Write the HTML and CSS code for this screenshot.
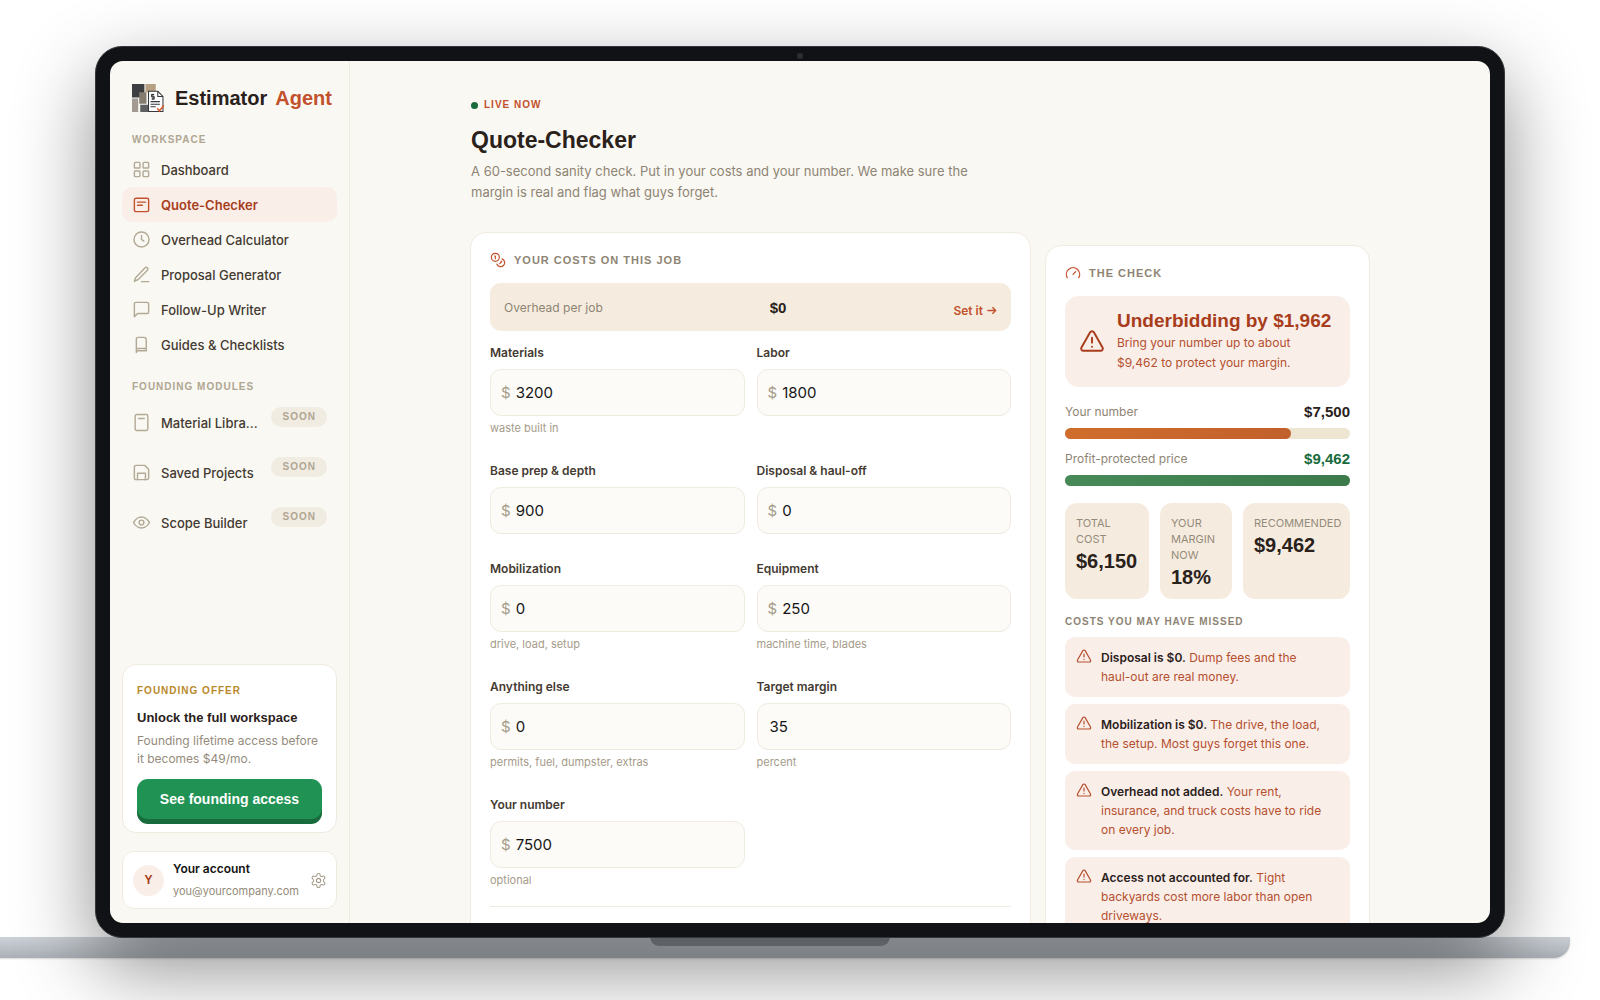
FILE: index.html
```
<!DOCTYPE html>
<html lang="en">

<head>
  <meta charset="UTF-8" />
  <meta name="viewport" content="width=device-width, initial-scale=1.0" />
  <title>Estimator Agent - Quote-Checker</title>
  <link rel="stylesheet" href="styles.css">
</head>

<body>
  <!-- Shared icons -->
  <svg class="sprite" aria-hidden="true">
    <symbol id="alert" viewBox="0 0 24 24">
      <path d="M21.73 18l-8-14a2 2 0 0 0-3.46 0l-8 14A2 2 0 0 0 4 21h16a2 2 0 0 0 1.73-3z" />
      <path d="M12 9v4.500M12 17.200v.1" />
    </symbol>
  </svg>

  <div class="laptop">
    <div class="lid">
      <span class="camera"></span>
      <div class="screen">
        <aside class="sidebar">
          <div class="brand">
            <svg class="logo" viewBox="0 0 31 27">
              <path fill="#3d3f41" d="M0 0h12v13H0z" />
              <path fill="#b8a083" d="M13 0h10v8H13z" />
              <path fill="#a39b93" d="M0 14h6v13H0z" />
              <path fill="#857c70" d="M7 8h7v11H7z" />
              <path fill="#5f6060" d="M8 20h8v7H8z" />
              <path fill="#fff" stroke="#34383c" d="M16 7h9l5 5v14.500H16z" />
              <path fill="none" stroke="#34383c" d="M25 7v5h5M18 17h9M18 19.500h9M18 22h5" />
              <path fill="none" stroke="#34383c" d="M21.500 10.200h-2.500v2h2.500v2.300H19M20.300 9.500v6" />
              <path fill="none" stroke="#d9582c" stroke-width="1.500" d="M24.500 23.500l2 2.500 4.500-5.500" />
            </svg>
            <span>Estimator</span>
            <span class="accent">Agent</span>
          </div>

          <h2 class="side-label">Workspace</h2>
          <nav class="nav">
            <a href="#" class="nav-item">
              <svg class="icon" viewBox="0 0 24 24"><rect x="3" y="3" width="7" height="7" rx="1" /><rect x="14" y="3" width="7" height="7" rx="1" /><rect x="3" y="14" width="7" height="7" rx="1" /><rect x="14" y="14" width="7" height="7" rx="1" /></svg>
              <span>Dashboard</span>
            </a>
            <a href="#" class="nav-item active">
              <svg class="icon" viewBox="0 0 24 24"><rect x="3" y="4" width="18" height="17" rx="2" /><path d="M7 9h10M7 13h6" /></svg>
              <span>Quote-Checker</span>
            </a>
            <a href="#" class="nav-item">
              <svg class="icon" viewBox="0 0 24 24"><circle cx="12" cy="12" r="9.500" /><path d="M12 7v5l3 2" /></svg>
              <span>Overhead Calculator</span>
            </a>
            <a href="#" class="nav-item">
              <svg class="icon" viewBox="0 0 24 24"><path d="M12 21h9M16.500 3.500a2.120 2.120 0 0 1 3 3L7.500 18.500 3 20.500l1.500-4.500z" /></svg>
              <span>Proposal Generator</span>
            </a>
            <a href="#" class="nav-item">
              <svg class="icon" viewBox="0 0 24 24"><path d="M21 15a2 2 0 0 1-2 2H7l-4 4V5a2 2 0 0 1 2-2h14a2 2 0 0 1 2 2z" /></svg>
              <span>Follow-Up Writer</span>
            </a>
            <a href="#" class="nav-item">
              <svg class="icon" viewBox="0 0 24 24"><path d="M5.500 22V5a2 2 0 0 1 2-2H15a3 3 0 0 1 3 3v14H7.500a2 2 0 0 0-2 2M5.500 19a2 2 0 0 1 2-2H18" /></svg>
              <span>Guides &amp; Checklists</span>
            </a>
          </nav>

          <h2 class="side-label">Founding Modules</h2>
          <nav class="nav">
            <a href="#" class="nav-item soon">
              <svg class="icon" viewBox="0 0 24 24"><rect x="4" y="2" width="16" height="20" rx="2" /><path d="M8.500 7h7" /></svg>
              <span>Material Libra...</span>
              <em class="badge">SOON</em>
            </a>
            <a href="#" class="nav-item soon">
              <svg class="icon" viewBox="0 0 24 24"><path d="M19 21H5a2 2 0 0 1-2-2V5a2 2 0 0 1 2-2h11l5 5v11a2 2 0 0 1-2 2z" /><path d="M7 21v-8h10v8" /></svg>
              <span>Saved Projects</span>
              <em class="badge">SOON</em>
            </a>
            <a href="#" class="nav-item soon">
              <svg class="icon" viewBox="0 0 24 24"><path d="M2 12s3.500-7 10-7 10 7 10 7-3.500 7-10 7-10-7-10-7z" /><circle cx="12" cy="12" r="3" /></svg>
              <span>Scope Builder</span>
              <em class="badge">SOON</em>
            </a>
          </nav>

          <div class="offer">
            <p class="offer-label">Founding Offer</p>
            <h3>Unlock the full workspace</h3>
            <p class="offer-text">Founding lifetime access before it becomes $49/mo.</p>
            <button type="button" class="offer-btn">See founding access</button>
          </div>

          <div class="account">
            <span class="avatar">Y</span>
            <div class="account-info">
              <strong>Your account</strong>
              <span>you@yourcompany.com</span>
            </div>
            <svg class="icon gear" viewBox="0 0 24 24"><path d="M12.220 2h-.44a2 2 0 0 0-2 2v.18a2 2 0 0 1-1 1.730l-.43.25a2 2 0 0 1-2 0l-.15-.08a2 2 0 0 0-2.730.73l-.22.38a2 2 0 0 0 .73 2.730l.15.1a2 2 0 0 1 1 1.720v.51a2 2 0 0 1-1 1.740l-.15.09a2 2 0 0 0-.73 2.730l.22.38a2 2 0 0 0 2.730.73l.15-.08a2 2 0 0 1 2 0l.43.25a2 2 0 0 1 1 1.730V20a2 2 0 0 0 2 2h.44a2 2 0 0 0 2-2v-.18a2 2 0 0 1 1-1.730l.43-.25a2 2 0 0 1 2 0l.15.08a2 2 0 0 0 2.730-.73l.22-.39a2 2 0 0 0-.73-2.730l-.15-.08a2 2 0 0 1-1-1.740v-.5a2 2 0 0 1 1-1.740l.15-.09a2 2 0 0 0 .73-2.730l-.22-.38a2 2 0 0 0-2.730-.73l-.15.08a2 2 0 0 1-2 0l-.43-.25a2 2 0 0 1-1-1.730V4a2 2 0 0 0-2-2z" /><circle cx="12" cy="12" r="3" /></svg>
          </div>
        </aside>

        <main class="main">
          <div class="content">
            <header class="page-head">
              <p class="live"><span class="dot"></span>Live Now</p>
              <h1>Quote-Checker</h1>
              <p class="intro">A 60-second sanity check. Put in your costs and your number. We make sure the margin is real and flag what guys forget.</p>
            </header>

            <div class="panels">
              <form class="card">
                <h2 class="card-title">
                  <svg class="icon" viewBox="0 0 24 24"><circle cx="8" cy="8" r="6" /><path d="M18.090 10.370A6 6 0 1 1 10.340 18M7 6h1v4M16.710 13.880l.7.71-2.820 2.820" /></svg>
                  Your costs on this job
                </h2>
                <div class="overhead">
                  <span>Overhead per job</span>
                  <strong>$0</strong>
                  <a href="#">Set it
                    <svg class="arrow" viewBox="0 0 24 24"><path d="M3 12h18M14 5l7 7-7 7" /></svg>
                  </a>
                </div>

                <div class="fields">
                  <div class="field">
                    <label for="materials">Materials</label>
                    <div class="box"><span>$</span><input type="text" id="materials" value="3200"></div>
                    <small>waste built in</small>
                  </div>
                  <div class="field">
                    <label for="labor">Labor</label>
                    <div class="box"><span>$</span><input type="text" id="labor" value="1800"></div>
                  </div>
                  <div class="field">
                    <label for="prep">Base prep &amp; depth</label>
                    <div class="box"><span>$</span><input type="text" id="prep" value="900"></div>
                  </div>
                  <div class="field">
                    <label for="disposal">Disposal &amp; haul-off</label>
                    <div class="box"><span>$</span><input type="text" id="disposal" value="0"></div>
                  </div>
                  <div class="field">
                    <label for="mobilization">Mobilization</label>
                    <div class="box"><span>$</span><input type="text" id="mobilization" value="0"></div>
                    <small>drive, load, setup</small>
                  </div>
                  <div class="field">
                    <label for="equipment">Equipment</label>
                    <div class="box"><span>$</span><input type="text" id="equipment" value="250"></div>
                    <small>machine time, blades</small>
                  </div>
                  <div class="field">
                    <label for="other">Anything else</label>
                    <div class="box"><span>$</span><input type="text" id="other" value="0"></div>
                    <small>permits, fuel, dumpster, extras</small>
                  </div>
                  <div class="field">
                    <label for="margin">Target margin</label>
                    <div class="box"><input type="text" id="margin" value="35"></div>
                    <small>percent</small>
                  </div>
                  <div class="field">
                    <label for="quote">Your number</label>
                    <div class="box"><span>$</span><input type="text" id="quote" value="7500"></div>
                    <small>optional</small>
                  </div>
                </div>
                <hr>
              </form>

              <section class="card check">
                <h2 class="card-title">
                  <svg class="icon" viewBox="0 0 24 24"><path d="M12 14l4-4M3.340 19a10 10 0 1 1 17.320 0" /></svg>
                  The check
                </h2>
                <div class="verdict">
                  <svg class="icon"><use href="#alert" /></svg>
                  <div>
                    <strong>Underbidding by $1,962</strong>
                    <p>Bring your number up to about $9,462 to protect your margin.</p>
                  </div>
                </div>

                <div class="bars">
                  <div class="bar-row"><span>Your number</span><strong>$7,500</strong></div>
                  <div class="track"><div class="fill" style="width: 79.3%"></div></div>
                  <div class="bar-row"><span>Profit-protected price</span><strong class="good">$9,462</strong></div>
                  <div class="track"><div class="fill good" style="width: 100%"></div></div>
                </div>

                <div class="stats">
                  <div class="stat"><span>Total cost</span><strong>$6,150</strong></div>
                  <div class="stat"><span>Your margin now</span><strong>18%</strong></div>
                  <div class="stat"><span>Recommended</span><strong>$9,462</strong></div>
                </div>

                <h3 class="missed-title">Costs you may have missed</h3>
                <ul class="missed">
                  <li><svg class="icon"><use href="#alert" /></svg><p><b>Disposal is $0.</b> Dump fees and the haul-out are real money.</p></li>
                  <li><svg class="icon"><use href="#alert" /></svg><p><b>Mobilization is $0.</b> The drive, the load, the setup. Most guys forget this one.</p></li>
                  <li><svg class="icon"><use href="#alert" /></svg><p><b>Overhead not added.</b> Your rent, insurance, and truck costs have to ride on every job.</p></li>
                  <li><svg class="icon"><use href="#alert" /></svg><p><b>Access not accounted for.</b> Tight backyards cost more labor than open driveways.</p></li>
                </ul>
              </section>
            </div>
          </div>
        </main>
      </div>
    </div>
    <div class="base"><div class="notch"></div></div>
  </div>
</body>

</html>
```
FILE: styles.css
```
/* General Styles */
* {
  box-sizing: border-box;
}

body {
  margin: 0;
  height: 100vh;
  overflow: hidden;
  background: #fff;
  color: #2a211b;
  font-family: Inter, "Liberation Sans", sans-serif;
}

h1, h2, h3, p, ul {
  margin: 0;
  padding: 0;
}

a {
  text-decoration: none;
}

.sprite {
  position: absolute;
  width: 0;
  height: 0;
}

.icon {
  width: 19px;
  height: 19px;
  flex: none;
  fill: none;
  stroke: currentColor;
  stroke-width: 1.8;
  stroke-linecap: round;
  stroke-linejoin: round;
}

/* Laptop */
.laptop {
  padding-top: 46px;
}

.lid {
  position: relative;
  z-index: 1;
  height: calc(100vh - 108px);
  margin: 0 95px;
  padding: 14px;
  background: #101216;
  border: 1px solid #34363b;
  border-radius: 27px;
  box-shadow: 0 30px 80px rgba(0, 0, 0, 0.45);
}

.camera {
  position: absolute;
  top: 6px;
  left: calc(50% - 3px);
  width: 6px;
  height: 6px;
  border-radius: 50%;
  background: #2b2e33;
}

.screen {
  display: flex;
  height: 100%;
  overflow: hidden;
  background: #f9f8f3;
  border-radius: 13px;
}

.base {
  height: 21px;
  margin: -1px 30px 0 -30px;
  background: linear-gradient(#cdd2d8, #abb0b6);
  border-radius: 0 0 16px 16px;
  box-shadow: 0 1px 2px rgba(0, 0, 0, 0.15);
}

.notch {
  width: 240px;
  height: 9px;
  margin: 0 auto;
  background: #8d9199;
  border-radius: 0 0 9px 9px;
}

/* Sidebar */
.sidebar {
  display: flex;
  flex-direction: column;
  flex: none;
  width: 240px;
  padding: 23px 12px 14px;
  border-right: 1px solid #f0ebdf;
}

.brand {
  display: flex;
  align-items: center;
  gap: 8px;
  height: 28px;
  padding-left: 10px;
  margin-bottom: 20px;
  font: bold 20px "Liberation Sans", Arial, sans-serif;
}

.logo {
  width: 32px;
  height: 28px;
  margin-right: 3px;
}

.accent {
  color: #c2512c;
}

.side-label {
  padding-left: 10px;
  margin-bottom: 4px;
  color: #b0a692;
  font: bold 10px/16px "Liberation Sans", Arial, sans-serif;
  letter-spacing: 1px;
  text-transform: uppercase;
}

.nav + .side-label {
  margin-top: 17px;
}

.nav-item {
  display: flex;
  align-items: center;
  gap: 10px;
  height: 35px;
  padding: 0 10px;
  border-radius: 10px;
  color: #443a31;
  font-size: 13px;
  font-weight: 500;
}

.nav-item .icon {
  color: #b3a995;
}

.nav-item.active {
  background: #faeee9;
  color: #a83d1c;
  font-weight: 600;
}

.nav-item.active .icon {
  color: #c2512c;
}

.nav-item.soon {
  height: 50px;
  padding-bottom: 3px;
}

.nav-item.soon span {
  flex: 1;
  white-space: nowrap;
}

.badge {
  align-self: flex-start;
  margin-top: 8px;
  padding: 0 11px 0 12px;
  border-radius: 10px;
  background: #f1ece2;
  color: #b0a692;
  font: bold 10px/20px "Liberation Sans", Arial, sans-serif;
  letter-spacing: 1px;
}

/* Founding Offer */
.offer {
  margin-top: auto;
  padding: 18px 14px 13px;
  background: #fff;
  border: 1px solid #f0ebdf;
  border-radius: 14px;
}

.offer-label {
  color: #b98a2b;
  font: bold 10px/16px "Liberation Sans", Arial, sans-serif;
  letter-spacing: 1px;
  text-transform: uppercase;
}

.offer h3 {
  margin: 9px 0 4px;
  font: bold 13px/20px "Liberation Sans", Arial, sans-serif;
}

.offer-text {
  color: #958b7b;
  font-size: 12px;
  line-height: 18px;
}

.offer-btn {
  width: 100%;
  height: 40px;
  margin: 11px 0 0;
  border: none;
  border-radius: 11px;
  background: #1f9254;
  box-shadow: 0 5px 0 #176b3c;
  color: #fff;
  font: bold 14px "Liberation Sans", Arial, sans-serif;
  cursor: pointer;
}

/* Account */
.account {
  display: flex;
  align-items: center;
  gap: 9px;
  height: 58px;
  margin-top: 18px;
  padding: 0 9px 0 10px;
  background: #fff;
  border: 1px solid #f0ebdf;
  border-radius: 12px;
}

.avatar {
  flex: none;
  width: 31px;
  border-radius: 50%;
  background: #faeee9;
  color: #a83d1c;
  font: bold 12px/31px "Liberation Sans", Arial, sans-serif;
  text-align: center;
}

.account-info {
  flex: 1;
  font-size: 11px;
  line-height: 22px;
}

.account-info strong {
  display: block;
  color: #111;
  font-size: 12px;
  font-weight: 600;
}

.account-info span {
  color: #958b7b;
}

.gear {
  width: 17px;
  height: 17px;
  color: #a59b89;
  stroke-width: 1.5;
}

/* Main */
.main {
  flex: 1;
  min-width: 0;
  padding: 36px 20px 0;
}

.content {
  max-width: 900px;
  margin: 0 auto;
}

.page-head {
  padding-left: 1px;
}

.live {
  display: flex;
  align-items: center;
  gap: 6px;
  color: #c2512c;
  font: bold 10px/16px "Liberation Sans", Arial, sans-serif;
  letter-spacing: 1px;
  text-transform: uppercase;
}

.dot {
  width: 7px;
  height: 7px;
  border-radius: 50%;
  background: #176b3c;
}

h1 {
  margin: 12px 0 6px;
  font: bold 23px/30px "Liberation Sans", Arial, sans-serif;
}

.intro {
  max-width: 520px;
  margin-bottom: 29px;
  color: #8e8474;
  font-size: 13px;
  line-height: 21px;
}

.panels {
  display: grid;
  grid-template-columns: minmax(0, 1fr) 325px;
  gap: 14px;
}

.card {
  padding: 19px;
  background: #fff;
  border: 1px solid #f0ebdf;
  border-radius: 16px;
}

.check {
  margin-top: 13px;
}

.card-title {
  display: flex;
  align-items: center;
  gap: 8px;
  height: 16px;
  margin-bottom: 15px;
  color: #8e8474;
  font: bold 11px/16px "Liberation Sans", Arial, sans-serif;
  letter-spacing: 1px;
  text-transform: uppercase;
}

.card-title .icon {
  width: 16px;
  height: 16px;
  color: #c2512c;
}

/* Costs Form */
.overhead {
  display: flex;
  align-items: center;
  justify-content: space-between;
  height: 48px;
  margin-bottom: 13px;
  padding: 0 14px;
  background: #f5ecdf;
  border-radius: 11px;
  color: #8e8474;
  font-size: 12px;
}

.overhead strong {
  color: #2a211b;
  font: bold 15px "Liberation Sans", Arial, sans-serif;
}

.overhead a {
  display: flex;
  align-items: center;
  gap: 3px;
  padding-top: 6px;
  color: #c2512c;
  font-weight: 600;
}

.arrow {
  width: 11px;
  height: 11px;
  fill: none;
  stroke: currentColor;
  stroke-width: 3;
}

.fields {
  display: grid;
  grid-template-columns: repeat(2, minmax(0, 1fr));
  gap: 26px 12px;
}

.field label {
  display: block;
  margin-bottom: 7px;
  color: #443a31;
  font-size: 12px;
  font-weight: 600;
  line-height: 18px;
}

.box {
  display: flex;
  align-items: center;
  gap: 5px;
  height: 47px;
  padding: 0 10px;
  background: #fcfbf8;
  border: 1px solid #f0ebdf;
  border-radius: 11px;
  color: #a59b89;
  font-size: 15px;
}

.box input {
  flex: 1;
  width: 100%;
  min-width: 0;
  padding: 0;
  border: none;
  outline: none;
  background: none;
  color: #161616;
  font: inherit;
}

.box input:first-child {
  padding-left: 2px;
}

.field small {
  display: block;
  margin-top: 4px;
  color: #a59b89;
  font-size: 11px;
  line-height: 16px;
}

hr {
  margin: 18px 0 0;
  border: none;
  border-top: 1px solid #f0ebdf;
}

/* Check Panel */
.verdict {
  display: flex;
  align-items: center;
  gap: 12px;
  padding: 13px 14px 14px;
  background: #faeee9;
  border-radius: 14px;
  color: #a83d1c;
}

.verdict .icon {
  width: 26px;
  height: 26px;
}

.verdict strong {
  font: bold 19px/24px "Liberation Sans", Arial, sans-serif;
  white-space: nowrap;
}

.verdict p {
  max-width: 200px;
  color: #b5502f;
  font-size: 12px;
  line-height: 20px;
}

.bars {
  margin: 15px 0 17px;
}

.bar-row {
  display: flex;
  justify-content: space-between;
  margin-bottom: 6px;
  color: #8e8474;
  font-size: 12px;
  line-height: 20px;
}

.bar-row strong {
  color: #2a211b;
  font: bold 15px/20px "Liberation Sans", Arial, sans-serif;
}

.bar-row .good {
  color: #176b3c;
}

.track {
  height: 11px;
  background: #eee5d3;
  border-radius: 6px;
}

.track + .bar-row {
  margin-top: 10px;
}

.fill {
  height: 100%;
  border-radius: 6px;
  background: linear-gradient(90deg, #d06d2c, #c2602c);
}

.fill.good {
  background: linear-gradient(90deg, #478a58, #3c7a4b);
}

.stats {
  display: grid;
  grid-template-columns: 84fr 72fr 107fr;
  gap: 11px;
}

.stat {
  padding: 12px 0 11px 11px;
  background: #f5ecdf;
  border-radius: 12px;
}

.stat span {
  display: block;
  padding-right: 7px;
  color: #958b7b;
  font-size: 11px;
  line-height: 16px;
  text-transform: uppercase;
}

.stat strong {
  display: block;
  margin-top: 3px;
  font: bold 20px/22px "Liberation Sans", Arial, sans-serif;
}

.missed-title {
  margin: 15px 0 7px;
  color: #8e8474;
  font: bold 10px/16px "Liberation Sans", Arial, sans-serif;
  letter-spacing: 1px;
  text-transform: uppercase;
}

.missed {
  display: grid;
  gap: 7px;
  list-style: none;
}

.missed li {
  display: flex;
  gap: 9px;
  padding: 11px 24px 11px 11px;
  background: #faeee9;
  border-radius: 10px;
  color: #b5502f;
  font-size: 12px;
  line-height: 19px;
}

.missed .icon {
  width: 16px;
  height: 16px;
}

.missed b {
  color: #2a211b;
  font-weight: 600;
}
```
